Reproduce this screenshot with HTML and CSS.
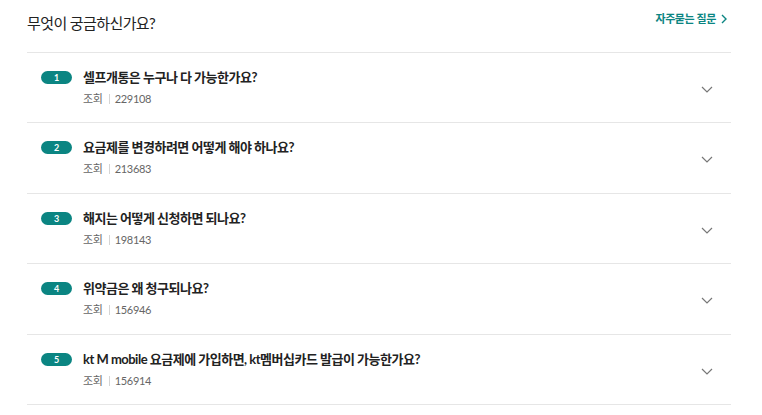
FILE: index.html
```html
<!DOCTYPE html>
<html lang="ko">
<head>
<meta charset="utf-8">
<link rel="stylesheet" href="styles.css">
</head>
<body>
<section class="faq">
  <header class="faq-head">
    <h2 class="faq-title">무엇이 궁금하신가요?</h2>
    <a class="faq-more" href="#">자주묻는 질문
      <svg class="more-ico" width="6" height="10" viewBox="0 0 6 10"><path d="M1 1l4 4-4 4" fill="none" stroke="#0b8582" stroke-width="1.4"/></svg>
    </a>
  </header>
  <ul class="faq-list">
    <li class="faq-item">
      <span class="badge">1</span>
      <div class="q">
        <p class="q-text">셀프개통은 누구나 다 가능한가요?</p>
        <p class="q-meta"><span>조회</span><i class="sep"></i><span class="num">229108</span></p>
      </div>
      <svg class="chev" width="12" height="7" viewBox="0 0 12 7"><path d="M1 1l5 5 5-5" fill="none" stroke="#777" stroke-width="1.2"/></svg>
    </li>
    <li class="faq-item">
      <span class="badge">2</span>
      <div class="q">
        <p class="q-text">요금제를 변경하려면 어떻게 해야 하나요?</p>
        <p class="q-meta"><span>조회</span><i class="sep"></i><span class="num">213683</span></p>
      </div>
      <svg class="chev" width="12" height="7" viewBox="0 0 12 7"><path d="M1 1l5 5 5-5" fill="none" stroke="#777" stroke-width="1.2"/></svg>
    </li>
    <li class="faq-item">
      <span class="badge">3</span>
      <div class="q">
        <p class="q-text">해지는 어떻게 신청하면 되나요?</p>
        <p class="q-meta"><span>조회</span><i class="sep"></i><span class="num">198143</span></p>
      </div>
      <svg class="chev" width="12" height="7" viewBox="0 0 12 7"><path d="M1 1l5 5 5-5" fill="none" stroke="#777" stroke-width="1.2"/></svg>
    </li>
    <li class="faq-item">
      <span class="badge">4</span>
      <div class="q">
        <p class="q-text">위약금은 왜 청구되나요?</p>
        <p class="q-meta"><span>조회</span><i class="sep"></i><span class="num">156946</span></p>
      </div>
      <svg class="chev" width="12" height="7" viewBox="0 0 12 7"><path d="M1 1l5 5 5-5" fill="none" stroke="#777" stroke-width="1.2"/></svg>
    </li>
    <li class="faq-item">
      <span class="badge">5</span>
      <div class="q">
        <p class="q-text">kt M mobile 요금제에 가입하면, kt멤버십카드 발급이 가능한가요?</p>
        <p class="q-meta"><span>조회</span><i class="sep"></i><span class="num">156914</span></p>
      </div>
      <svg class="chev" width="12" height="7" viewBox="0 0 12 7"><path d="M1 1l5 5 5-5" fill="none" stroke="#777" stroke-width="1.2"/></svg>
    </li>
  </ul>
</section>
</body>
</html>
```
FILE: styles.css
```css
* { box-sizing: border-box; }
html, body { margin: 0; padding: 0; background: #fff; }
body {
  font-family: Lato, "Noto Sans CJK KR", sans-serif;
  color: #222;
}
.faq {
  width: 704px;
  margin-left: 27px;
}
.faq-head {
  height: 53px;
  display: flex;
  justify-content: space-between;
  align-items: flex-start;
  border-bottom: 1px solid #e6e6e6;
}
.faq-title {
  margin: 13px 0 0;
  font-size: 15px;
  font-weight: 400;
  letter-spacing: -0.6px;
  line-height: 20px;
  color: #222;
}
.faq-more {
  margin: 11px 4px 0 0;
  display: flex;
  align-items: center;
  gap: 5px;
  font-size: 11px;
  font-weight: 700;
  letter-spacing: -0.4px;
  line-height: 16px;
  color: #0b8582;
  text-decoration: none;
}
.faq-list {
  list-style: none;
  margin: 0;
  padding: 0;
}
.faq-item {
  display: flex;
  align-items: flex-start;
  height: 70.4px;
  padding: 14px 0 0 14px;
  border-bottom: 1px solid #e6e6e6;
}
.badge {
  flex: none;
  width: 31px;
  height: 13px;
  margin-top: 4px;
  border-radius: 7px;
  background: #0b8582;
  color: #fff;
  font-size: 9px;
  font-weight: 700;
  line-height: 13px;
  text-align: center;
}
.q {
  flex: 1;
  margin-left: 11px;
}
.q-text {
  margin: 0;
  font-size: 13px;
  font-weight: 700;
  letter-spacing: -0.5px;
  line-height: 20px;
  color: #222;
}
.q-meta {
  margin: 4px 0 0;
  display: flex;
  align-items: center;
  font-size: 11px;
  line-height: 16px;
  color: #666;
  letter-spacing: -0.3px;
}
.sep {
  width: 1px;
  height: 10px;
  background: #d5d5d5;
  margin: 0 5px 0 6px;
}
.chev {
  flex: none;
  margin: 19px 18px 0 0;
}
```
